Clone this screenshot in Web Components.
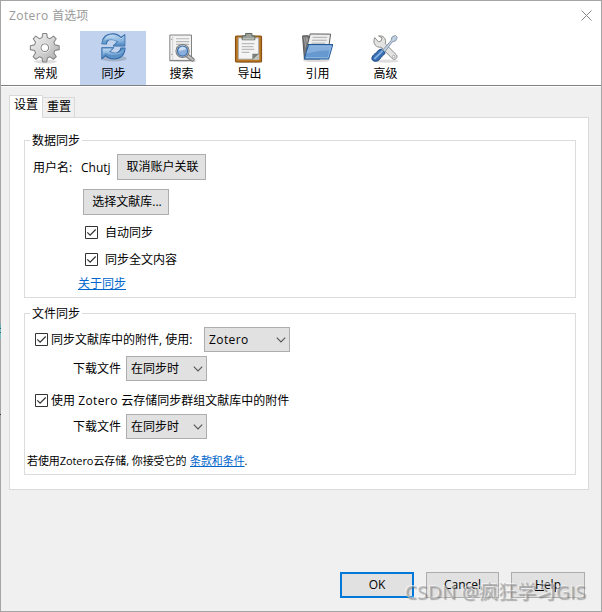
<!DOCTYPE html>
<html lang="zh-CN"><head><meta charset="utf-8"><title>Zotero 首选项</title>
<style>
html,body{margin:0;width:602px;height:612px;overflow:hidden}
body{font:12px/16px "Open Sans","Noto Sans CJK SC",sans-serif;color:#000}
</style></head><body>
<pref-window></pref-window>
<script>
const define=(name,html,setup)=>customElements.define(name,class extends HTMLElement{
  connectedCallback(){
    if(this.shadowRoot)return;
    const root=this.attachShadow({mode:'open'});
    root.innerHTML=html;
    if(setup)setup(this,root);
  }
});

const icons={
gear:`<defs><linearGradient id="g" x1="0" y1="0" x2="1" y2="1"><stop stop-color="#f6f6f6"/><stop offset=".5" stop-color="#d4d4d4"/><stop offset="1" stop-color="#a9a9a9"/></linearGradient></defs><ellipse cx="17" cy="30" rx="12" ry="2" fill="#000" opacity=".13"/><path fill="url(#g)" stroke="#858585" stroke-width="1.1" stroke-linejoin="round" fill-rule="evenodd" d="M14.3 1h3.9l.8 4.3 2.7 1.1 3.6-2.7 2.8 2.8-2.5 3.6 1.1 2.7 4.4.9v4l-4.4.8-1.1 2.7 2.5 3.6-2.8 2.8-3.6-2.5-2.7 1.1-.8 4.3h-3.9l-.9-4.3-2.7-1.1-3.6 2.5-2.8-2.8 2.5-3.6-1.1-2.7-4.3-.8v-4l4.3-.9 1.1-2.7-2.5-3.6 2.8-2.8 3.6 2.7 2.7-1.1zM16.3 11.7a4 4 0 1 0 .01 0z"/><circle cx="16.3" cy="15.7" r="5" fill="none" stroke="#eee" stroke-width=".8"/>`,
sync:`<defs><linearGradient id="s" x1="0" y1="0" x2="0" y2="1"><stop stop-color="#c0dbf1"/><stop offset=".6" stop-color="#83b1dc"/><stop offset="1" stop-color="#4e86c2"/></linearGradient></defs><g transform="translate(2.2 -.6) scale(.94 .96)"><ellipse cx="16" cy="28.5" rx="14" ry="3.2" fill="#456" opacity=".26"/><g stroke="#3169a5" stroke-width="1.1" stroke-linejoin="round"><path fill="#6fa3d4" d="M3 12.8C3.5 5 9 2 15 2c4 0 7 1.5 9 4l4.2-3v12H15.6l4.7-4.5C15 5.7 8.5 7.8 8 13z"/><path fill="url(#s)" stroke="#5b8dc2" stroke-width=".6" d="M3.4 12C5 5 11 2.4 17 4c3 .8 5.3 2.4 7.3 4.3L27.6 4.5v10H16.6l4-4C14 7.3 7 8 3.4 12z"/><path fill="#5b92c8" d="M28.5 17.2C28 25 23 29 16 29c-4 0-6.5-1-9-3.5L3 29V17h13l-4.3 4c5.5 4 11.5 1.3 12.2-3.8z"/><path fill="url(#s)" stroke="#5b8dc2" stroke-width=".6" d="M28 18C25 25 16 28 7 23l-3.4 4V17.6h11.2l-3.5 3.6c6 3 12.5 1.5 16.7-3.2z"/></g><path d="M7 6.5c5-4.5 12-3.8 17.2 1.2l3-3" fill="none" stroke="#e1effa" stroke-width=".8"/></g>`,
search:`<g transform="translate(1.6 .2) scale(.97)"><ellipse cx="17" cy="30" rx="15" ry="1.4" fill="#000" opacity=".17"/><path d="M3.5 2.5h23v27h-23z" fill="#f3f3f3" stroke="#777"/><path d="M6.5 3v26" stroke="#d0d0d0"/><path d="M10 6.5h14M10 9.5h14M10 12.5h14M10 15.5h14M10 19.5h12" stroke="#b7b7b7" stroke-width="1.2"/><path d="M5 7h1M5 23h1" stroke="#777"/><path d="m21.5 24 6.2 4.6" stroke="#777" stroke-width="4.5" stroke-linecap="round"/><path d="m21.5 24 6.2 4.6" stroke="#bbb" stroke-width="2.4" stroke-linecap="round"/><circle cx="17" cy="19.5" r="7" fill="#e6e9ea" stroke="#777" stroke-width="1.1"/><circle cx="17" cy="19.5" r="5.4" fill="#8caedd" stroke="#356ca9" stroke-width="1.2"/><path d="M13 19c.3-5 7-5.7 8-1-3-1-4.5 2-8 1z" fill="#cfdff3"/></g>`,
paste:`<ellipse cx="16" cy="30.5" rx="13" ry="1" fill="#000" opacity=".2"/><rect x="2.6" y="3.6" width="26.8" height="26.8" rx="1" fill="#bd7721" stroke="#845015" stroke-width="1.2"/><path d="M5.5 5.5h21v22h-21z" fill="#f4f4f4" stroke="#aaa"/><path d="M9 11.5h13M9 14.5h12M9 17.5h13M9 20.5h8" stroke="#bbb" stroke-width="1.2"/><path d="m20 28 7-6v6z" fill="#c2c4be"/><path d="M20 28v-6h7z" fill="#777d77"/><path d="M9.5 7.5v-4H13V1h6.5v2.5h3v4z" fill="#9ca29b" stroke="#596159"/><path d="M10 6.7h12" stroke="#d5d9d4"/>`,
folder:`<ellipse cx="16" cy="29" rx="14" ry="1.5" fill="#000" opacity=".14"/><path d="m1.6 3.5 6-.2 1 2h15l-4 22H3.5z" fill="#777" stroke="#555"/><path d="m3 5 4 18M5 5l4 18M6 5l4 15" stroke="#bbb" stroke-width=".7"/><path d="m9.5 1.5 21 .2-2.2 16h-23z" fill="#eee" stroke="#555"/><path d="M12 5h15M11.5 8h15M11 11h14" stroke="#aaa"/><path d="M7.7 12.5h25l-4.2 14.8H3.4z" fill="#6699d0" stroke="#235b9a" stroke-width="1.1"/><path d="M8.5 13.8h22.7l-1.8 5c-8-1-15 1-24 3z" fill="#86afdd"/><path d="M8.5 13.8h22.7L28 26H5" fill="none" stroke="#9fc4e8" stroke-width=".8"/>`,
tools:`<g transform="translate(1 .9) scale(.97)"><ellipse cx="17" cy="29.5" rx="14" ry="1.7" fill="#000" opacity=".13"/><path d="M5 4.5 9 9l3-1 .8-3.2-3.6-2C14 1.8 18 6 16.2 11L28 22.7c2.3 2.6-1 6.8-4.2 4.3L12 14.7C6.4 15.5 2.5 11 5 4.5z" fill="#e3e4e1" stroke="#858a84"/><circle cx="25.2" cy="24.6" r="1.3" fill="#fff" stroke="#888" stroke-width=".7"/><path d="m13 18.5 9.5-11 1-3.7 3.5-1.6 2 2-1.5 3.6-4 1.4-8 11" fill="#bfd1e3" stroke="#8492a4"/><path d="m12.2 16.7 4 4c-1.3 2-2.2 3.2-4.1 4.1-1.2 3-4.3 5.7-7.6 4.7-4.5-1.4-2.4-6.5 2.6-9 .8-2 2.4-3.3 5.1-3.8z" fill="#376eb2" stroke="#173f7c"/><path d="m5.3 26.6 7.8-7.7" stroke="#83b1e3" stroke-width="2" stroke-linecap="round"/></g>`
};

define('tool-button',`<style>
:host{display:flex;flex-direction:column;align-items:center;width:66px;height:54px}
:host([selected]){background:#c1d2ee}
svg{display:block;width:32px;height:32px;margin-top:1px;flex:none}
span{line-height:18px;margin-top:1px;padding-left:1px}
</style><svg viewBox="0 0 33 32" fill="none"></svg><span><slot></slot></span>`,(el,root)=>{
  root.querySelector('svg').innerHTML=icons[el.getAttribute('icon')];
});

define('tab-label',`<style>
:host{display:block;box-sizing:border-box;width:32px;height:20px;border:1px solid #d9d9d9;border-left:0;border-bottom:0;background:#f0f0f0;padding-left:4px;line-height:18px;white-space:nowrap}
:host([selected]){width:34px;height:23px;background:#fff;border-left:1px solid #d9d9d9;padding-left:4px;line-height:18px;margin-bottom:-1px;z-index:1}
</style><slot></slot>`);

define('group-box',`<style>
:host{display:block}
fieldset{box-sizing:border-box;height:100%;margin:0;padding:0;border:1px solid #dcdcdc;min-width:0}
legend{margin-left:5px;padding:0 2px;line-height:18px;height:16px}
</style><fieldset><legend></legend><slot></slot></fieldset>`,(el,root)=>{
  root.querySelector('legend').textContent=el.getAttribute('label');
});

define('push-button',`<style>
:host{display:block;flex:none;height:26px}
button{display:flex;justify-content:center;align-items:center;width:100%;height:100%;box-sizing:border-box;border:1px solid #adadad;background:#e1e1e1;font:inherit;color:inherit;padding:0 0 var(--lift,0px) var(--inset,0px);white-space:nowrap}
:host([primary]) button{border:2px solid #0078d7}
</style><button><span><slot></slot></span></button>`);

define('check-box',`<style>
:host{display:flex;align-items:center;gap:var(--gap,3px);height:17px;white-space:nowrap}
svg{display:block;flex:none}
span{padding-top:1px}
</style><svg width="13" height="13" viewBox="0 0 13 13"><path d="M.5.5h12v12H.5z" fill="#fff" stroke="#333"/><path d="m2.3 6.4 2.8 2.8 5.6-5.7" fill="none" stroke="#333" stroke-width="1.2"/></svg><span><slot></slot></span>`);

define('drop-down',`<style>
:host{display:flex;align-items:center;justify-content:space-between;flex:none;box-sizing:border-box;height:25px;border:1px solid #adadad;background:#e1e1e1;padding:0 3px 0 4px}
</style><span><slot></slot></span><svg width="10" height="6" viewBox="0 0 10 6"><path d="m.8.7 4.2 4.2L9.2.7" fill="none" stroke="#555" stroke-width="1.1"/></svg>`);

define('text-link',`<style>
:host{display:block;color:#0066cc;text-decoration:underline;text-underline-offset:1px;white-space:nowrap}
</style><slot></slot>`);

define('pref-window',`<style>
:host{display:flex;flex-direction:column;box-sizing:border-box;width:602px;height:612px;border:1px solid #a5a5a5;background:#f0f0f0;position:relative}
header{height:30px;flex:none;box-sizing:border-box;background:#fff;display:flex;justify-content:space-between;align-items:center;padding:0 9px 0 8px;color:#999}
header svg{display:block;margin-top:-2px}
nav{display:flex;gap:2px;height:56px;flex:none;box-sizing:border-box;background:#fff;padding-left:11px;border-bottom:1px solid #fff;box-shadow:inset 0 -1px #808080}
.tabs{display:flex;align-items:flex-end;height:22px;margin:8px 0 0 8px;flex:none}
main{box-sizing:border-box;width:580px;height:373px;flex:none;margin-left:8px;border:1px solid #dadada;background:#fff;padding:14px 12px 0 14px;--inset:2px}
.row{display:flex;align-items:center;white-space:nowrap}
.z{letter-spacing:.4px}
footer{display:flex;gap:12px;margin:82px 0 0 339px}
footer push-button{width:74px}
.small{font-size:11px;letter-spacing:-.08px}
.mark{position:absolute;left:404px;top:578px;font-size:19px;line-height:26px;letter-spacing:.25px;white-space:nowrap;color:#9998;text-shadow:-1px -1px 0 #fff8,1px 1px 1px #5557;pointer-events:none}
.edge{position:absolute;left:-1px;top:323px;width:1px;height:92px;background:linear-gradient(#65adb2 0 4px,#34666a 4px 5px,#78bdc0 5px 8px,#34666a 8px 9px,#78bdc0 9px 15px,#0000 15px 90px,#333 90px 91px,#0000 91px)}
</style>
<header><span><span class="z">Zotero </span>首选项</span><svg width="11" height="11" viewBox="0 0 11 11"><path d="m.5.5 10 10m0-10-10 10" stroke="#888" stroke-width="1"/></svg></header>
<nav><tool-button icon="gear">常规</tool-button><tool-button icon="sync" selected>同步</tool-button><tool-button icon="search">搜索</tool-button><tool-button icon="paste">导出</tool-button><tool-button icon="folder">引用</tool-button><tool-button icon="tools">高级</tool-button></nav>
<div class="tabs"><tab-label selected>设置</tab-label><tab-label>重置</tab-label></div>
<main>
<group-box label="数据同步" style="height:166px">
<div class="row" style="padding-left:8px;height:26px;margin-top:6px"><span style="width:48px;padding-top:2px">用户名:</span><span style="width:36px;padding-top:2px">Chutj</span><push-button style="width:89px">取消账户关联</push-button></div>
<div class="row" style="padding-left:58px;margin-top:9px"><push-button style="width:86px">选择文献库...</push-button></div>
<div class="row" style="padding-left:60px;margin-top:9px"><check-box style="--gap:7px">自动同步</check-box></div>
<div class="row" style="padding-left:60px;margin-top:10px"><check-box style="--gap:7px">同步全文内容</check-box></div>
<div class="row" style="padding-left:53px;margin-top:8px"><text-link>关于同步</text-link></div>
</group-box>
<group-box label="文件同步" style="height:170px;margin-top:7px">
<div class="row" style="padding-left:10px;margin-top:6px"><check-box style="width:169px">同步文献库中的附件, 使用:</check-box><drop-down class="z" style="width:86px">Zotero</drop-down></div>
<div class="row" style="padding-left:48px;margin-top:4px"><span style="width:53px">下载文件</span><drop-down style="width:81px">在同步时</drop-down></div>
<div class="row" style="padding-left:10px;margin-top:11px"><check-box>使用 <span class="z">Zotero </span>云存储同步群组文献库中的附件</check-box></div>
<div class="row" style="padding-left:48px;margin-top:5px"><span style="width:53px">下载文件</span><drop-down style="width:81px">在同步时</drop-down></div>
<div class="row small" style="padding-left:2px;margin-top:14px"><span style="width:163px">若使用Zotero云存储, 你接受它的</span><text-link>条款和条件</text-link><span>.</span></div>
</group-box>
</main>
<footer><push-button primary>OK</push-button><push-button style="width:73px;--lift:0px">Cancel</push-button><push-button><u>H</u>elp</push-button></footer>
<div class="edge"></div><div class="mark">CSDN @疯狂学习GIS</div>`);
</script></body></html>
